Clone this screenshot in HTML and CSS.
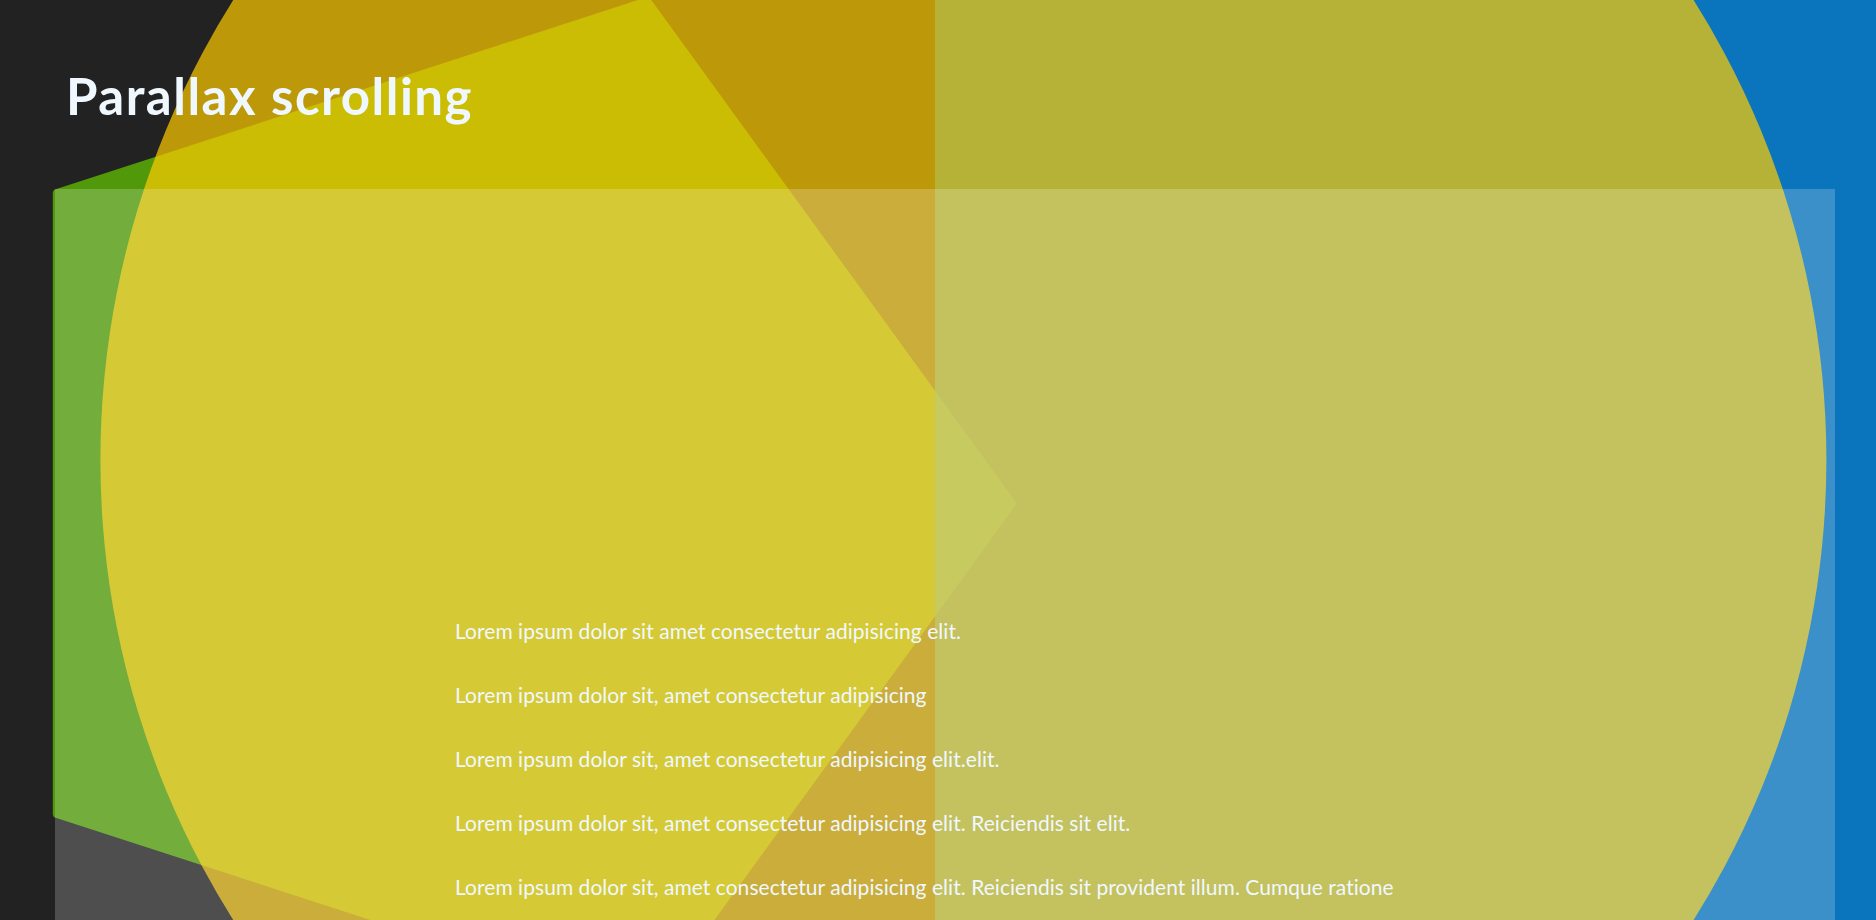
FILE: index.html
```html
<!DOCTYPE html>
<html lang="en">
<head>
<meta charset="utf-8">
<title>Parallax scrolling</title>
<link rel="stylesheet" href="styles.css">
</head>
<body>
<div class="page">
  <svg class="backdrop" viewBox="0 0 1876 920" width="1876" height="920" aria-hidden="true">
    <g class="shape shape-pentagon">
      <polygon points="1012.1,503.5 647.2,1005.8 56.8,813.9 56.8,193.1 647.2,1.2" />
    </g>
    <rect class="shape shape-square" x="935" y="-10" width="960" height="960" />
    <circle class="shape shape-circle" cx="963.4" cy="460" r="863" />
  </svg>
  <header class="header">
    <h1 class="title">Parallax scrolling</h1>
  </header>
  <section class="card">
    <div class="copy">
      <p>Lorem ipsum dolor sit amet consectetur adipisicing elit.</p>
      <p>Lorem ipsum dolor sit, amet consectetur adipisicing</p>
      <p>Lorem ipsum dolor sit, amet consectetur adipisicing elit.elit.</p>
      <p>Lorem ipsum dolor sit, amet consectetur adipisicing elit. Reiciendis sit elit.</p>
      <p>Lorem ipsum dolor sit, amet consectetur adipisicing elit. Reiciendis sit provident illum. Cumque ratione</p>
    </div>
  </section>
</div>
</body>
</html>
```
FILE: styles.css
```css
html, body {
  margin: 0;
  height: 100%;
  overflow: hidden;
  background: #222222;
}

.page {
  position: relative;
  height: 920px;
  overflow: hidden;
  font-family: Lato, "Liberation Sans", sans-serif;
}

.backdrop {
  position: absolute;
  left: 0;
  top: 0;
  width: 1876px;
  height: 920px;
  display: block;
}

.shape {
  opacity: 0.7;
}

.shape-pentagon polygon {
  fill: #66cc00;
  stroke: #66cc00;
  stroke-width: 8;
  stroke-linejoin: round;
}

.shape-square {
  fill: #0099ff;
}

.shape-circle {
  fill: #ffcc00;
}

.header,
.card {
  position: relative;
  z-index: 1;
}

.header {
  height: 189px;
  box-sizing: border-box;
  padding: 65px 0 0 66px;
}

.title {
  margin: 0;
  font-size: 51px;
  font-weight: 700;
  line-height: 1.2;
  letter-spacing: 1.5px;
  color: aliceblue;
}

.card {
  margin-left: 55px;
  width: 1780px;
  height: 731px;
  box-sizing: border-box;
  padding: 410px 0 0 400px;
  background: rgba(255, 255, 255, 0.2);
}

.copy p {
  margin: 0;
  font-size: 21px;
  line-height: 64px;
  letter-spacing: 0.04px;
  color: aliceblue;
  white-space: nowrap;
}
```
